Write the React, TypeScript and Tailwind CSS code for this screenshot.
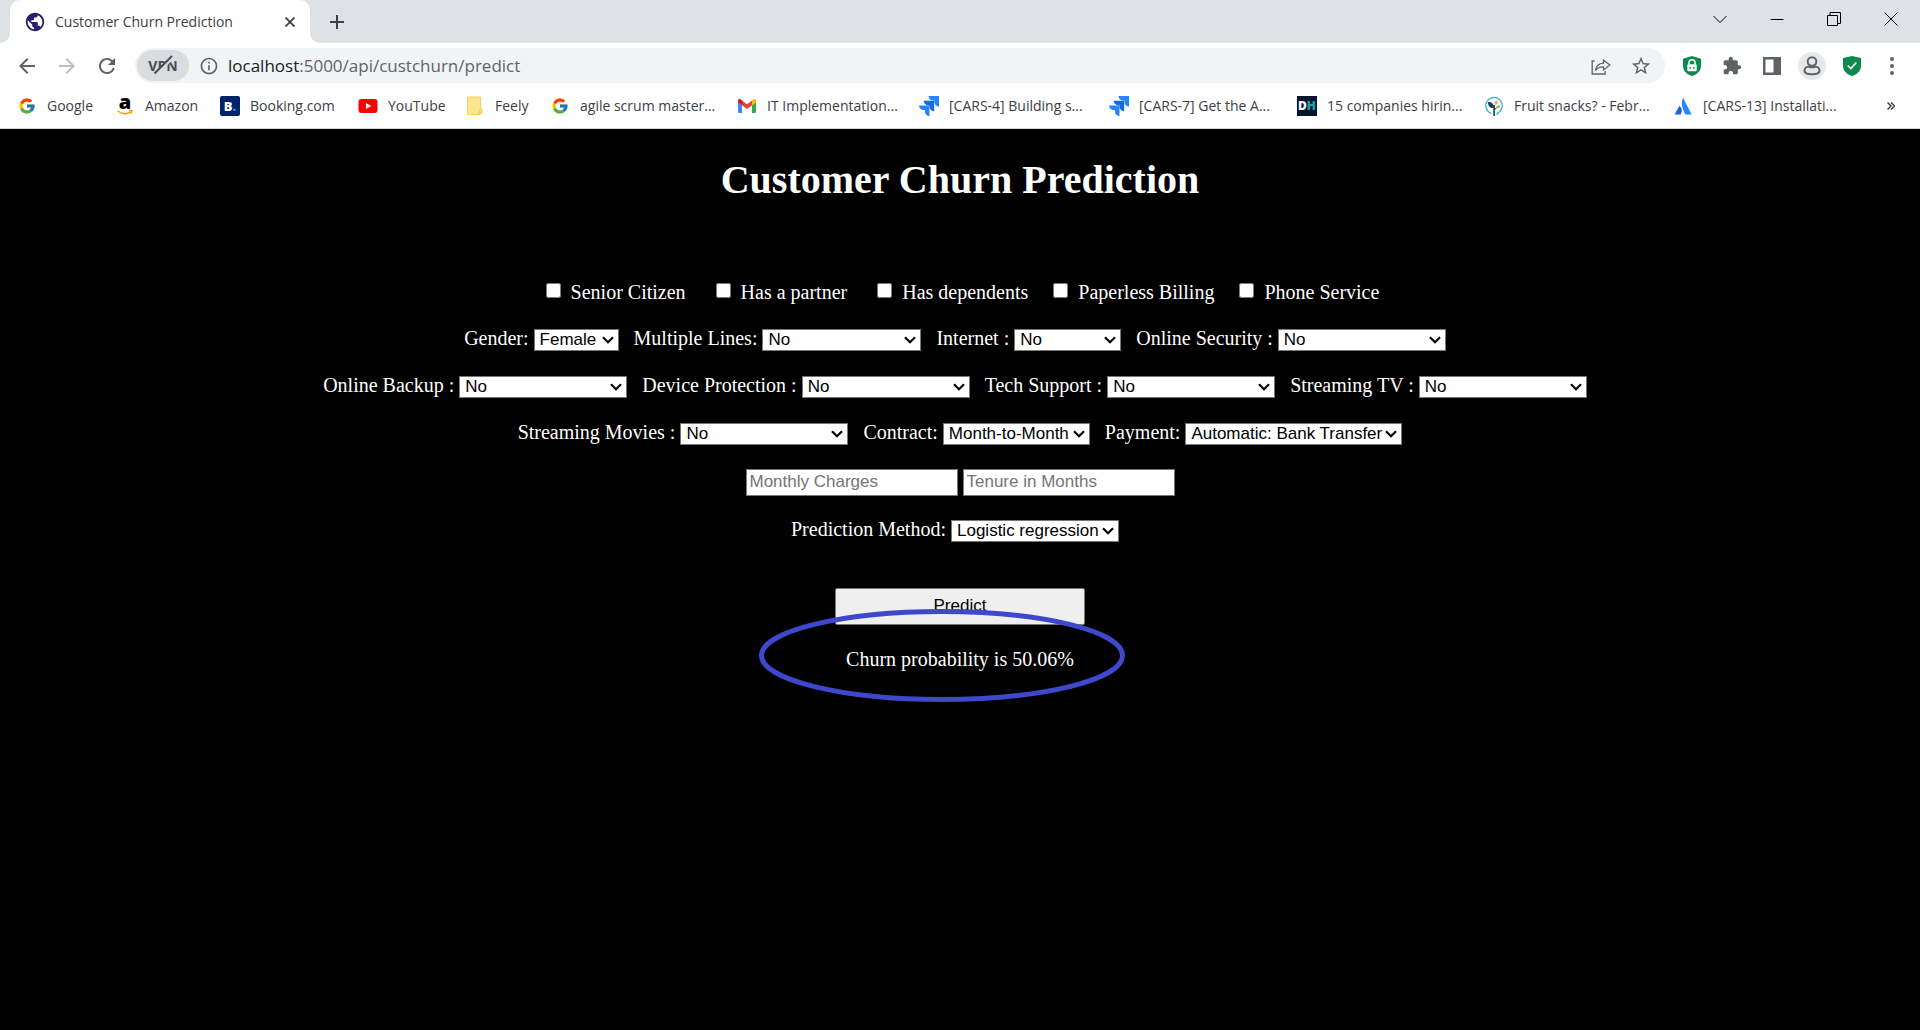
import { useId, type ReactNode } from "react";
import { MdArrowBack, MdArrowForward, MdExtension, MdInfoOutline, MdPublic, MdRefresh, MdStarBorder } from "react-icons/md";
import { FcGoogle } from "react-icons/fc";

/* ---------- Favicons ---------- */

function AmazonIcon() {
  return (
    <span className="flex flex-col items-center" aria-hidden="true">
      <span className="-mt-2 text-[20px] leading-6 font-extrabold text-black">a</span>
      <svg viewBox="0 0 16 5" className="-mt-1 h-[5px] w-4">
        <path d="M.5.800C4.500 4.300 10 4.600 13.500 2.200M12 .800l3-.2-.8 2.900" fill="none" stroke="#f90" strokeWidth="1.400" />
      </svg>
    </span>
  );
}

function BookingIcon() {
  return (
    <span
      className="flex size-5 items-center justify-center rounded-xs bg-[#00246c] text-[13px] leading-5 font-extrabold text-white"
      aria-hidden="true"
    >
      B<span className="text-[#17a3e8]">.</span>
    </span>
  );
}

function YouTubeIcon() {
  return (
    <svg viewBox="0 0 20 20" className="size-5" aria-hidden="true">
      <rect x=".5" y="3" width="19" height="14" rx="3" fill="#f00" />
      <path d="M8 7v6l5.200-3z" fill="#fff" />
    </svg>
  );
}

function NoteIcon() {
  return (
    <svg viewBox="0 0 20 20" className="size-5" aria-hidden="true">
      <path d="M2.500 1h13v13l1.500 2.500-2 2H2.500z" fill="#ffe58c" stroke="#f8cf5a" strokeWidth="1" />
      <path d="M15.500 12.500c2 .5 2.200 3.500.5 5l-2.500 1 1-3z" fill="#ffdf72" stroke="#f3c443" strokeWidth=".8" />
    </svg>
  );
}

function GmailIcon() {
  return (
    <svg viewBox="0 0 20 20" className="size-5" aria-hidden="true">
      <path d="M1 6l4 3v8H2.300A1.300 1.300 0 0 1 1 15.700z" fill="#4285f4" />
      <path d="M19 6l-4 3v8h2.700a1.300 1.300 0 0 0 1.300-1.300z" fill="#34a853" />
      <path d="M5 4.500l5 3.800 5-3.800V9.200L10 13 5 9.200z" fill="#ea4335" />
      <path d="M1 5c0-2 2-2.500 3.200-1.200L5 4.500v4.700L1 6.200z" fill="#c5221f" />
      <path d="M19 5c0-2-2-2.500-3.200-1.200l-.8.7v4.700l4-3z" fill="#fbbc04" />
    </svg>
  );
}

function JiraIcon() {
  const step = "M0 0h10.500v10.500a4.600 4.600 0 0 1-4.600-4.600V4.600H4.600A4.600 4.600 0 0 1 0 0z";
  return (
    <svg viewBox="0 0 20 20" className="size-5" aria-hidden="true">
      <path d={step} transform="translate(0 9.500)" fill="#2684ff" />
      <path d={step} transform="translate(4.700 4.800)" fill="#1668e3" />
      <path d={step} transform="translate(9.500 0)" fill="#2684ff" />
    </svg>
  );
}

function DhIcon() {
  return (
    <span
      className="flex size-5 items-center justify-center bg-[#06152f] text-[12px] leading-5 font-extrabold text-white"
      aria-hidden="true"
    >
      D<span className="text-[#16a5ad]">H</span>
    </span>
  );
}

function PlantIcon() {
  return (
    <svg viewBox="0 0 20 20" className="size-5" aria-hidden="true">
      <path d="M7.500 17.500a8.200 8.200 0 1 1 5 0" fill="none" stroke="#49b8cf" strokeWidth="1.300" />
      <path d="M4 6c4-.5 6 2 5.800 6C6 12.500 4 10 4 6z" fill="#0d4654" />
      <path d="M9.300 9v11h1.600v-6l3-3-3 1.500V9z" fill="#0d4654" />
      <path d="M11 9c-1-2.500 0-4 2.500-4.500C14 7 13 8.500 11 9z" fill="#f58b85" />
      <path d="M12 12c.5-2.200 2-3 4.300-2.500-.6 2-2 3-4.300 2.500z" fill="#86c440" />
      <path d="M12.500 18.200h2" stroke="#49b8cf" strokeWidth="1.200" />
    </svg>
  );
}

function AtlassianIcon() {
  return (
    <svg viewBox="0 0 20 20" className="size-5" aria-hidden="true">
      <path d="M6.500 9.800c2.800 2.600 3 5.400 1.300 8.700H1.500z" fill="#1a66dd" />
      <path d="M10 1.500l8.500 17h-6.200C9 12 7.800 7.500 10 1.500z" fill="#2684ff" />
    </svg>
  );
}

/* ---------- Browser frame ---------- */

const bookmarks: { name: string; icon: ReactNode; width: string }[] = [
  { name: "Google", icon: <FcGoogle className="size-[18px]" />, width: "w-[98px]" },
  { name: "Amazon", icon: <AmazonIcon />, width: "w-[105px]" },
  { name: "Booking.com", icon: <BookingIcon />, width: "w-[138px]" },
  { name: "YouTube", icon: <YouTubeIcon />, width: "w-[107px]" },
  { name: "Feely", icon: <NoteIcon />, width: "w-[85px]" },
  { name: "agile scrum master...", icon: <FcGoogle className="size-[18px]" />, width: "w-[187px]" },
  { name: "IT Implementation...", icon: <GmailIcon />, width: "w-[182px]" },
  { name: "[CARS-4] Building s...", icon: <JiraIcon />, width: "w-[190px]" },
  { name: "[CARS-7] Get the A...", icon: <JiraIcon />, width: "w-[188px]" },
  { name: "15 companies hirin...", icon: <DhIcon />, width: "w-[187px]" },
  { name: "Fruit snacks? - Febr...", icon: <PlantIcon />, width: "w-[189px]" },
  { name: "[CARS-13] Installati...", icon: <AtlassianIcon />, width: "w-[150px]" },
];

function TabStrip() {
  return (
    <div className="flex h-[43px] bg-[#dee1e6] pr-[1px] pl-[10px]">
      <div className="relative flex w-[300px] items-center rounded-t-[10px] bg-white pr-3 pl-[14px]">
        <svg viewBox="0 0 10 10" className="absolute bottom-0 -left-[10px] size-[10px]" aria-hidden="true">
          <path d="M10 0v10H0A10 10 0 0 0 10 0z" fill="#fff" />
        </svg>
        <svg viewBox="0 0 10 10" className="absolute -right-[10px] bottom-0 size-[10px]" aria-hidden="true">
          <path d="M0 0v10h10A10 10 0 0 1 0 0z" fill="#fff" />
        </svg>
        <MdPublic className="size-[22px] shrink-0 text-[#2b1d6b]" />
        <span className="ml-[9px] flex-1 text-[14px] whitespace-nowrap text-[#3c4043]">Customer Churn Prediction</span>
        <button type="button" aria-label="Close tab" className="flex size-4 items-center justify-center">
          <svg viewBox="0 0 10 10" className="size-[10px]" aria-hidden="true">
            <path d="M.5.500l9 9M9.500.500l-9 9" stroke="#3c4043" strokeWidth="1.800" />
          </svg>
        </button>
      </div>
      <button type="button" aria-label="New tab" className="ml-5 flex w-[14px] items-center justify-center">
        <svg viewBox="0 0 14 14" className="size-[14px]" aria-hidden="true">
          <path d="M7 0v14M0 7h14" stroke="#3c4043" strokeWidth="2" />
        </svg>
      </button>
      <div className="ml-auto flex h-[37px] text-black">
        <button type="button" aria-label="Search tabs" className="flex w-[57px] items-center justify-center">
          <svg viewBox="0 0 14 14" className="size-[14px]" fill="none" stroke="currentColor" aria-hidden="true">
            <path d="M.5 4l6.500 6.500L13.500 4" />
          </svg>
        </button>
        <button type="button" aria-label="Minimize" className="flex w-[57px] items-center justify-center">
          <svg viewBox="0 0 14 14" className="size-[14px]" fill="none" stroke="currentColor" aria-hidden="true">
            <path d="M.5 7.500h13" />
          </svg>
        </button>
        <button type="button" aria-label="Restore" className="flex w-[57px] items-center justify-center">
          <svg viewBox="0 0 14 14" className="size-[14px]" fill="none" stroke="currentColor" aria-hidden="true">
            <path d="M.5 3.500h10v10H.500zM3 3V.500h10.500V11.500H11" />
          </svg>
        </button>
        <button type="button" aria-label="Close" className="flex w-[57px] items-center justify-center">
          <svg viewBox="0 0 14 14" className="size-[14px]" fill="none" stroke="currentColor" aria-hidden="true">
            <path d="M.5.500l13 13M13.500.500l-13 13" />
          </svg>
        </button>
      </div>
    </div>
  );
}

function ToolButton({ label, children }: { label: string; children: ReactNode }) {
  return (
    <button type="button" aria-label={label} className="flex h-7 w-10 shrink-0 items-center justify-center">
      {children}
    </button>
  );
}

function Toolbar() {
  return (
    <div className="flex h-[45px] items-center bg-white pr-2 pl-[7px] text-[#5f6368]">
      <div className="flex w-[128px] shrink-0">
        <ToolButton label="Back">
          <MdArrowBack className="size-6" />
        </ToolButton>
        <button type="button" aria-label="Forward" className="flex h-7 w-10 items-center justify-center text-[#bdbfc1]">
          <MdArrowForward className="size-6" />
        </button>
        <ToolButton label="Reload">
          <MdRefresh className="size-6" />
        </ToolButton>
      </div>
      <div className="flex h-[35px] flex-1 items-center rounded-full bg-[#f1f3f4] pr-1 pl-[2px]">
        <button
          type="button"
          aria-label="VPN off"
          className="relative flex h-[31px] w-[52px] items-center justify-center rounded-full bg-[#dadce0] text-[14px] font-bold text-[#4a4d51]"
        >
          VPN
          <svg viewBox="0 0 20 20" className="absolute top-[5px] left-4 size-5" aria-hidden="true">
            <path d="M3.500 19L19.500 3" stroke="#dadce0" strokeWidth="3" />
            <path d="M1.500 18.500L19 1" stroke="#4a4d51" strokeWidth="2" />
          </svg>
        </button>
        <MdInfoOutline className="ml-[10px] size-5 shrink-0" />
        <div className="ml-[9px] flex-1 text-[17px] leading-6 whitespace-nowrap">
          <span className="text-[#202124]">localhost</span>:5000/api/custchurn/predict
        </div>
        <ToolButton label="Share">
          <svg viewBox="0 0 20 20" className="size-5" fill="none" stroke="currentColor" strokeWidth="1.300" aria-hidden="true">
            <path d="M3.500 5H1.200v13h13v-3" />
            <path d="M4.500 14.500c.5-4.500 3-7 8-7.300V4l6.300 5-6.300 5v-3.200c-4 0-6.300 1-8 3.700z" />
          </svg>
        </ToolButton>
        <ToolButton label="Bookmark this page">
          <MdStarBorder className="size-[22px]" />
        </ToolButton>
      </div>
      <div className="ml-[7px] flex shrink-0">
        <ToolButton label="Secure connection">
          <svg viewBox="0 0 20 20" className="size-5" aria-hidden="true">
            <path d="M10 0l9 2.700V10c0 5-4 8.500-9 10-5-1.500-9-5-9-10V2.700z" fill="#0a8a4c" />
            <rect x="5.300" y="8.300" width="9.400" height="7" rx="1" fill="#fff" />
            <path d="M7 8.500V6.800a3 3 0 0 1 6 0v1.700" fill="none" stroke="#fff" strokeWidth="1.600" />
            <path d="M7.500 11h1.300v1.700H7.500zM11.200 11h1.300v1.700h-1.300z" fill="#0a8a4c" />
          </svg>
        </ToolButton>
        <ToolButton label="Extensions">
          <MdExtension className="size-5" />
        </ToolButton>
        <ToolButton label="Side panel">
          <svg viewBox="0 0 18 18" className="size-[18px]" aria-hidden="true">
            <path d="M0 0h18v18H0zM2.500 2.500v13h8v-13z" fill="currentColor" fillRule="evenodd" />
          </svg>
        </ToolButton>
        <ToolButton label="Profile">
          <span className="flex size-7 items-center justify-center rounded-full bg-[#e6e8ec]">
            <svg viewBox="0 0 20 20" className="size-5" fill="none" stroke="currentColor" strokeWidth="2" aria-hidden="true">
              <circle cx="10" cy="5.500" r="4.300" />
              <path d="M6.800 10.500C4.500 10.500 2.500 12.500 2.500 14.800S5 18.300 10 18.300s7.500-1.200 7.500-3.500-2-4.300-4.300-4.300c-2 1-4.400 1-6.400 0z" />
            </svg>
          </span>
        </ToolButton>
        <ToolButton label="Site safety">
          <svg viewBox="0 0 20 20" className="size-5" aria-hidden="true">
            <path d="M10 0l9 2v8c0 5-4 8.500-9 10-5-1.500-9-5-9-10V2z" fill="#0a8a4c" />
            <path d="M5.800 9.500l3 3 5.500-6" fill="none" stroke="#fff" strokeWidth="1.700" />
          </svg>
        </ToolButton>
        <ToolButton label="Menu">
          <svg viewBox="0 0 4 18" className="h-[18px] w-1" fill="currentColor" aria-hidden="true">
            <circle cx="2" cy="2" r="2" />
            <circle cx="2" cy="9" r="2" />
            <circle cx="2" cy="16" r="2" />
          </svg>
        </ToolButton>
      </div>
    </div>
  );
}

function BookmarksBar() {
  return (
    <nav
      aria-label="Bookmarks"
      className="flex h-[41px] items-center border-b border-[#d5d7da] bg-white pr-[25px] pb-1 pl-[17px]"
    >
      <ul className="flex min-w-0 flex-1">
        {bookmarks.map((b) => (
          <li key={b.name} className={`shrink-0 ${b.width}`}>
            <a href="#" className="flex items-center gap-[10px] text-[14px] leading-6 whitespace-nowrap text-[#3c4043]">
              <span className="flex size-5 shrink-0 items-center justify-center">{b.icon}</span>
              {b.name}
            </a>
          </li>
        ))}
      </ul>
      <button type="button" aria-label="More bookmarks" className="shrink-0">
        <svg viewBox="0 0 8 8" className="size-2" fill="none" stroke="#3c4043" strokeWidth="1.500" aria-hidden="true">
          <path d="M.5.500L4 4 .500 7.500M4 .500L7.500 4 4 7.500" />
        </svg>
      </button>
    </nav>
  );
}

/* ---------- Form ---------- */

function CheckField({ label, className = "" }: { label: string; className?: string }) {
  const id = useId();
  return (
    <div className={`flex ${className}`}>
      <input id={id} type="checkbox" className="mt-[2px] mr-[10px] ml-[5px] size-[15px]" />
      <label htmlFor={id}>{label}</label>
    </div>
  );
}

function SelectField({ label, options, width }: { label: string; options: string[]; width: string }) {
  const id = useId();
  return (
    <div className="flex items-center gap-[5px]">
      <label htmlFor={id} className="pb-1">{label}</label>
      <div className={`relative flex ${width}`}>
        <select
          id={id}
          className="h-[22px] w-full appearance-none border border-[#767676] bg-white pl-[5px] font-['Liberation_Sans',Arial,sans-serif] text-[17px] leading-5 text-black"
        >
          {options.map((o) => (
            <option key={o}>{o}</option>
          ))}
        </select>
        <svg viewBox="0 0 12 8" className="pointer-events-none absolute top-[7px] right-[5px] h-2 w-3" aria-hidden="true">
          <path d="M1 1.200l5 5 5-5" fill="none" stroke="#000" strokeWidth="2.200" />
        </svg>
      </div>
    </div>
  );
}

function NumberField({ label }: { label: string }) {
  return (
    <input
      type="text"
      aria-label={label}
      placeholder={label}
      className="h-[27px] w-[212px] border border-[#767676] bg-white px-[3px] pb-[2px] font-['Liberation_Sans',Arial,sans-serif] text-[17px] leading-6 text-black placeholder:text-[#757575]"
    />
  );
}

const serviceOptions = ["No", "Yes", "No internet service"];

function ChurnForm() {
  return (
    <form className="flex flex-col items-center gap-[23px]" onSubmit={(e) => e.preventDefault()}>
      <div className="flex h-6">
        <CheckField label="Senior Citizen" className="mr-[25px]" />
        <CheckField label="Has a partner" className="mr-[25px]" />
        <CheckField label="Has dependents" className="mr-5" />
        <CheckField label="Paperless Billing" className="mr-5" />
        <CheckField label="Phone Service" />
      </div>
      <div className="flex h-6 items-center gap-[15px] pr-[10px]">
        <SelectField label="Gender:" options={["Female", "Male"]} width="w-[85px]" />
        <SelectField label="Multiple Lines:" options={["No", "Yes", "No phone service"]} width="w-[159px]" />
        <SelectField label="Internet :" options={["No", "DSL", "Fiber optic"]} width="w-[107px]" />
        <SelectField label="Online Security :" options={serviceOptions} width="w-[168px]" />
      </div>
      <div className="flex h-6 items-center gap-[15px] pr-[10px]">
        <SelectField label="Online Backup :" options={serviceOptions} width="w-[168px]" />
        <SelectField label="Device Protection :" options={serviceOptions} width="w-[168px]" />
        <SelectField label="Tech Support :" options={serviceOptions} width="w-[168px]" />
        <SelectField label="Streaming TV :" options={serviceOptions} width="w-[168px]" />
      </div>
      <div className="flex h-6 items-center gap-[15px]">
        <SelectField label="Streaming Movies :" options={serviceOptions} width="w-[168px]" />
        <SelectField label="Contract:" options={["Month-to-Month", "One year", "Two year"]} width="w-[147px]" />
        <SelectField
          label="Payment:"
          options={["Automatic: Bank Transfer", "Automatic: Credit Card", "Electronic Check", "Mailed Check"]}
          width="w-[217px]"
        />
      </div>
      <div className="flex gap-[5px]">
        <NumberField label="Monthly Charges" />
        <NumberField label="Tenure in Months" />
      </div>
      <div className="flex h-6 items-center pr-[10px]">
        <SelectField label="Prediction Method:" options={["Logistic regression", "Random forest"]} width="w-[168px]" />
      </div>
      <div className="relative mt-[22px] flex w-[250px] flex-col items-center gap-[23px]">
        <button
          type="submit"
          className="h-[37px] w-full rounded-xs border border-[#767676] bg-[#efefef] pb-[2px] font-['Liberation_Sans',Arial,sans-serif] text-[17px] leading-6 text-black"
        >
          Predict
        </button>
        <output className="whitespace-nowrap">Churn probability is 50.06%</output>
        <svg
          viewBox="0 0 366 93"
          className="pointer-events-none absolute top-[21px] -left-[76px] h-[93px] w-[366px]"
          aria-hidden="true"
        >
          <ellipse cx="183" cy="46.500" rx="180.500" ry="44" fill="none" stroke="#3f48cc" strokeWidth="5" />
        </svg>
      </div>
    </form>
  );
}

export default function App() {
  return (
    <div className="flex min-h-screen flex-col bg-black">
      <header className="font-['Open_Sans','Segoe_UI',sans-serif]">
        <TabStrip />
        <Toolbar />
        <BookmarksBar />
      </header>
      <main className="flex-1 font-['Liberation_Serif','Times_New_Roman',serif] text-[20px] leading-[23px] text-white">
        <h1 className="mt-7 mb-[78px] text-center text-[40px] leading-[46px] font-bold">Customer Churn Prediction</h1>
        <ChurnForm />
      </main>
    </div>
  );
}
